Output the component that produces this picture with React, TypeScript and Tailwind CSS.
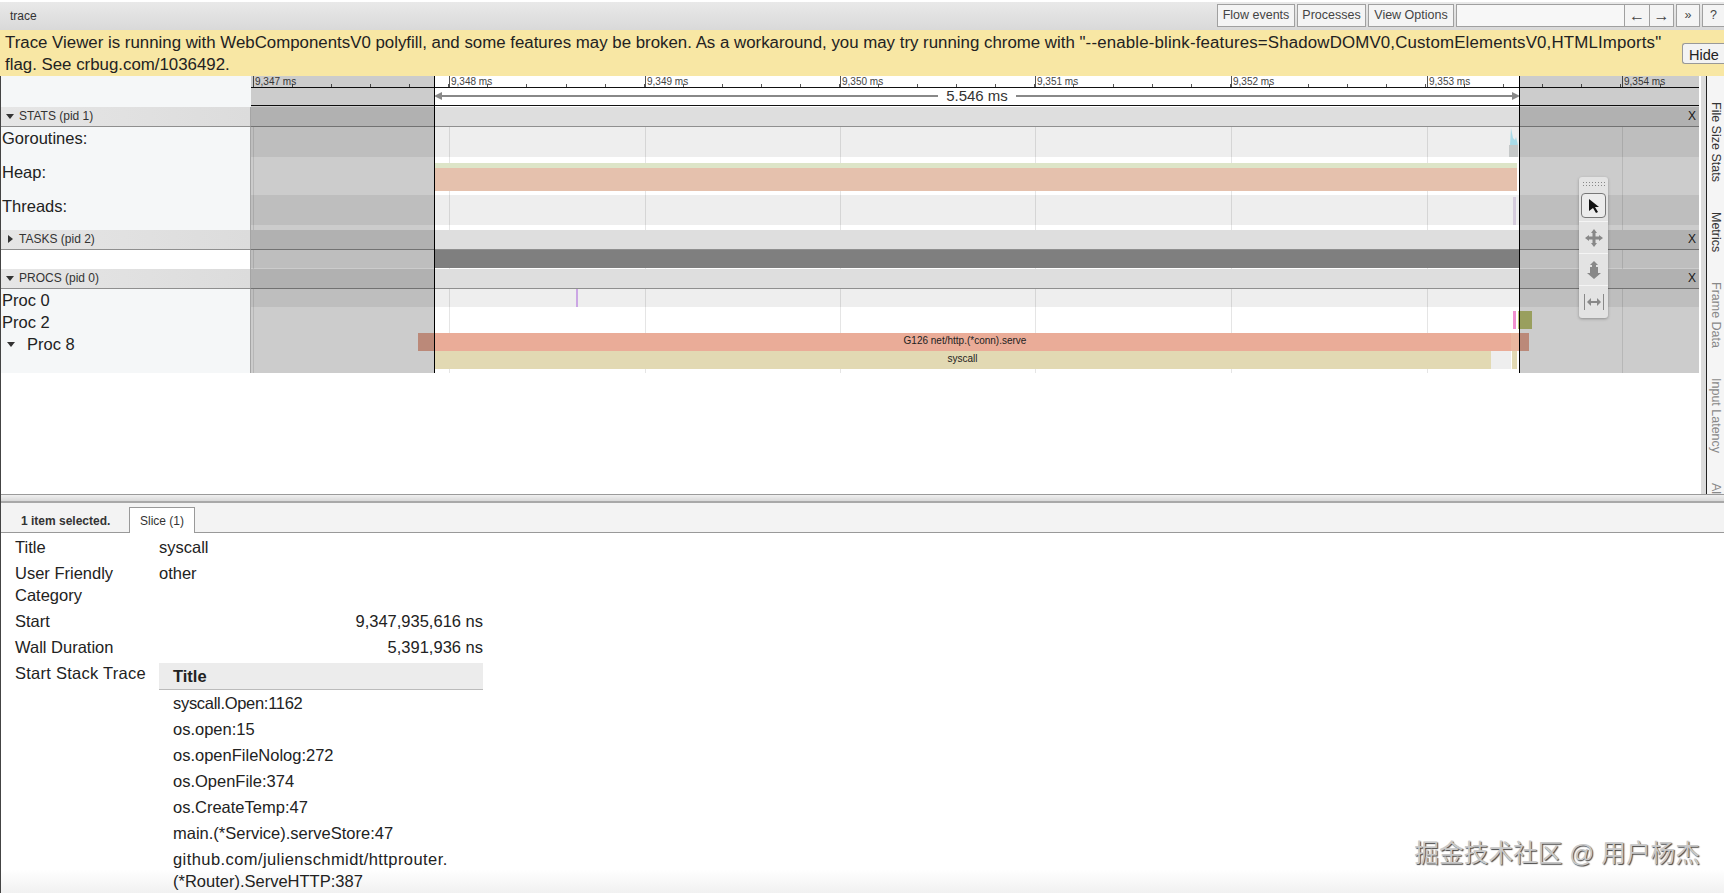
const majors = [2, 198, 394, 589, 784, 980, 1176, 1371]
const labels = ["9,347 ms", "9,348 ms", "9,349 ms", "9,350 ms", "9,351 ms", "9,352 ms", "9,353 ms", "9,354 ms"]
const minors = Array.from({ length: 37 }, (_, i) => 2 + i * 39.07)
const stack = ["os.open:15", "os.openFileNolog:272", "os.OpenFile:374", "os.CreateTemp:47", "main.(*Service).serveStore:47"]

function Grid() {
  return (
    <>
      {majors.map((x) => (
        <div key={x} className="absolute top-0 bottom-0 w-px bg-black/10" style={{ left: x }} />
      ))}
    </>
  )
}

function Tri({ open }: { open: boolean }) {
  return (
    <svg width="8" height="8" viewBox="0 0 8 8" className="shrink-0 fill-[#333]">
      {open ? <path d="M0 2h8L4 7z" /> : <path d="M2 0v8l5-4z" />}
    </svg>
  )
}

function Header({ title, open }: { title: string; open: boolean }) {
  return (
    <div className="flex h-5 border-b border-[#8f8f8f] bg-[#dedede]">
      <div className="flex w-[251px] items-center gap-[5px] border-r border-[#a5a5a5] bg-gradient-to-r from-[#e6e6e6] to-[#dcdcdc] pb-[2px] pl-[6px] text-[12px] text-[#333]">
        <Tri open={open} />
        {title}
      </div>
      <div className="relative flex flex-1 items-center justify-end pr-[3px] pb-[2px] text-[12px] text-[#222]">X</div>
    </div>
  )
}

function Row({ label, h, bg, children, labelClass }: { label?: React.ReactNode; h: string; bg: string; children?: React.ReactNode; labelClass?: string }) {
  return (
    <div className={`flex ${h}`}>
      <div className={`w-[251px] border-r border-[#a5a5a5] bg-[#f5f7f8] pl-[2px] text-[16.5px] leading-[22px] text-[#222] ${labelClass ?? ""}`}>{label}</div>
      <div className={`relative flex-1 overflow-visible ${bg}`}>
        <Grid />
        {children}
      </div>
    </div>
  )
}

function ToolBtn({ children, className }: { children: React.ReactNode; className?: string }) {
  return <div className={`flex h-[23px] items-center justify-center border border-[#a0a0a0] bg-[#f4f4f4] text-[12.5px] text-[#444] ${className ?? ""}`}>{children}</div>
}

function Palette() {
  return (
    <div className="absolute top-[101px] left-[1328px] flex h-[141px] w-[29px] flex-col items-center rounded-[3px] bg-[#e3e3e3] shadow-[0_1px_3px_rgba(0,0,0,0.3)]">
      <div className="mt-[4px] h-[7px] w-[23px] bg-[radial-gradient(#888_0.7px,transparent_0.9px)] bg-[length:3px_3px]" />
      <div className="mt-[5px] flex h-[25px] w-[25px] items-center justify-center rounded-[4px] border border-[#777] bg-[#ececec]">
        <svg width="14" height="16" viewBox="0 0 14 16"><path d="M2 1l10 8H8l3 5-2 1-3-5-4 3z" fill="#111" /></svg>
      </div>
      <div className="mt-[3px] flex h-[32px] w-full items-center justify-center border-t border-[#f4f4f4]">
        <svg width="18" height="18" viewBox="0 0 18 18" fill="#888"><path d="M9 0l3 4h-1.5v3.5H14V6l4 3-4 3v-1.5h-3.5V14H12l-3 4-3-4h1.5v-3.5H4V12L0 9l4-3v1.5h3.5V4H6z" /></svg>
      </div>
      <div className="flex h-[32px] w-full items-center justify-center border-t border-[#f4f4f4]">
        <svg width="14" height="18" viewBox="0 0 14 18" fill="#888"><path d="M7 0l4 4H9v2h2v6h3l-7 6-7-6h3V6h2V4H3z" /></svg>
      </div>
      <div className="flex h-[32px] w-full items-center justify-center border-t border-[#f4f4f4]">
        <svg width="20" height="16" viewBox="0 0 20 16" fill="#888"><path d="M0 0h1v16H0zM19 0h1v16h-1zM3 8l4-4v3h6V4l4 4-4 4V9H7v3z" /></svg>
      </div>
    </div>
  )
}

export default function App() {
  return (
    <div className="relative flex h-[893px] w-[1724px] flex-col overflow-hidden bg-white font-['Liberation_Sans','Noto_Sans_CJK_SC',sans-serif]">
      {/* toolbar */}
      <div className="mt-[2px] flex h-[28px] shrink-0 items-start justify-between bg-gradient-to-b from-[#e9e9e9] to-[#d9d9d9] pt-[2px] pl-[10px]">
        <div className="pt-[3px] text-[12px] text-[#333]">trace</div>
        <div className="flex gap-[2px]">
          <ToolBtn className="w-[78px]">Flow events</ToolBtn>
          <ToolBtn className="w-[69px]">Processes</ToolBtn>
          <ToolBtn className="w-[86px]">View Options</ToolBtn>
          <div className="flex">
            <div className="h-[23px] w-[169px] border border-[#a0a0a0] bg-[#f7f7f7]" />
            <ToolBtn className="w-[25px] border-l-0 text-[16px]">←</ToolBtn>
            <ToolBtn className="w-[24px] border-l-0 text-[16px]">→</ToolBtn>
          </div>
          <ToolBtn className="w-[24px]">»</ToolBtn>
          <ToolBtn className="w-[22px] border-r-0">?</ToolBtn>
        </div>
      </div>

      {/* warning */}
      <div className="flex h-[46px] shrink-0 items-start justify-between bg-[#f8e7a4] pt-[2px] pl-[5px] text-[16.85px] leading-[22px] whitespace-nowrap text-[#222]">
        <div>
          Trace Viewer is running with WebComponentsV0 polyfill, and some features may be broken. As a workaround, you may try running chrome with <span className="tracking-[0.16px]">"--enable-blink-features=ShadowDOMV0,CustomElementsV0,HTMLImports"</span>
          <br />
          flag. See crbug.com/1036492.
        </div>
        <button className="mt-[11px] h-[21px] w-[42px] shrink-0 rounded-l-[3px] border border-r-0 border-[#999] bg-[#f3f3f3] pl-[6px] text-left text-[14.5px] text-[#222]">Hide</button>
      </div>

      {/* timeline + side panel */}
      <div className="flex h-[418px] shrink-0">
        <div className="relative w-[1699px]">
          <div className="flex h-[12px]">
            <div className="w-[251px] bg-[#f5f7f8]" />
            <div className="relative flex-1 border-b border-[#111] bg-white">
              {minors.map((x) => (
                <div key={x} className="absolute bottom-0 h-[3px] w-px bg-[#555]" style={{ left: x }} />
              ))}
              {majors.map((x, i) => (
                <div key={x} className="absolute top-0 bottom-0 border-l border-[#555] pl-px text-[10px] leading-[11px] text-[#444]" style={{ left: x }}>
                  {labels[i]}
                </div>
              ))}
            </div>
          </div>
          <div className="flex h-[18px]">
            <div className="w-[251px] bg-[#f5f7f8]" />
            <div className="relative flex-1 border-b border-[#111] bg-white">
              <div className="absolute top-[3px] left-[183px] flex h-[10px] w-[1086px] items-center">
                <svg width="8" height="8" viewBox="0 0 8 8" className="shrink-0 fill-[#888]"><path d="M0 4l8-4v8z" /></svg>
                <div className="h-[2px] flex-1 bg-[#888]" />
                <div className="bg-white px-[8px] text-[15px] leading-[14px] text-[#333]">5.546 ms</div>
                <div className="h-[2px] flex-1 bg-[#888]" />
                <svg width="8" height="8" viewBox="0 0 8 8" className="shrink-0 fill-[#888]"><path d="M8 4L0 0v8z" /></svg>
              </div>
            </div>
          </div>
          <div className="flex h-px">
            <div className="w-[251px] bg-[#f5f7f8]" />
          </div>

          <Header title="STATS (pid 1)" open />
          <Row label="Goroutines:" h="h-[30px]" bg="bg-[#eeeeee]">
            <svg width="10" height="30" viewBox="0 0 10 30" className="absolute top-0 left-[1258px]">
              <path d="M1 18L2 1l2 10 2 2 1-3 2 8z" fill="#a9dbe8" />
              <path d="M0 18h9v12H0z" fill="#c5c8c8" />
            </svg>
          </Row>
          <Row label="Heap:" h="h-[38px]" bg="bg-white" labelClass="pt-[4px]">
            <div className="absolute top-[6px] left-[184px] h-[5px] w-[1082px] bg-[#dde5c8]" />
            <div className="absolute top-[11px] left-[184px] h-[23px] w-[1082px] bg-[#e5c1ad]" />
          </Row>
          <Row label="Threads:" h="h-[30px]" bg="bg-[#eeeeee]">
            <div className="absolute top-[2px] left-[1262px] h-[28px] w-[3px] bg-[#d5cbdc]" />
          </Row>
          <Row h="h-[5px]" bg="bg-white" />
          <Header title="TASKS (pid 2)" open={false} />
          <Row h="h-[18px]" bg="bg-[#eeeeee]" labelClass="bg-white">
            <div className="absolute top-0 left-[183px] h-[18px] w-[1085px] bg-[#7f7f7f]" />
          </Row>
          <Row h="h-px" bg="bg-white" labelClass="bg-white" />
          <Header title="PROCS (pid 0)" open />
          <Row label="Proc 0" h="h-[18px]" bg="bg-[#eeeeee]">
            <div className="absolute top-0 left-[325px] h-[18px] w-[2px] bg-[#cba6e4]" />
          </Row>
          <Row label="Proc 2" h="h-[26px]" bg="bg-white" labelClass="pt-[4px]">
            <div className="absolute top-[4px] left-[1262px] h-[18px] w-[3px] bg-[#f08fcf]" />
            <div className="absolute top-[4px] left-[1267px] h-[18px] w-[14px] bg-[#c0c776]" />
          </Row>
          <Row h="h-[40px]" bg="bg-white" label={<div className="flex items-center gap-[12px] pl-[5px]"><Tri open />Proc 8</div>}>
            <div className="absolute top-0 left-[167px] flex h-[18px] w-[1111px] items-center justify-center bg-[#eaac98] pr-[17px] pb-[3px] text-[10px] text-[#222]">G126 net/http.(*conn).serve</div>
            <div className="absolute top-0 left-[1260px] h-[18px] w-[8px] bg-[#e9b7a0]" />
            <div className="absolute top-[18px] left-[183px] flex h-[18px] w-[1057px] items-center justify-center bg-[#e2d9b3] pb-[3px] text-[10px] text-[#222]">syscall</div>
            <div className="absolute top-[18px] left-[1240px] h-[18px] w-[20px] bg-[#eeeeee]" />
            <div className="absolute top-[18px] left-[1261px] h-[18px] w-[5px] bg-[#e2d9b3]" />
          </Row>

          {/* selection shade over the tracks */}
          <div className="absolute top-0 left-[251px] h-[297px] w-[184px] border-r border-black bg-black/20" />
          <div className="absolute top-0 left-[1519px] h-[297px] w-[180px] border-l border-black bg-black/20" />
          <div className="absolute top-0 left-[251px] h-[297px] w-[1448px]">
            <Palette />
          </div>
        </div>

        <div className="ml-[2px] w-[5px] bg-[#dcdcdc]" />
        <div className="flex flex-1 flex-col gap-[30px] overflow-hidden border-l border-[#222] bg-[#f5f5f5] pt-[26px] pl-px text-[12.5px] leading-[16px]">
          <div className="shrink-0 whitespace-nowrap text-[#333] [writing-mode:vertical-rl]">File Size Stats</div>
          <div className="shrink-0 whitespace-nowrap text-[#333] [writing-mode:vertical-rl]">Metrics</div>
          <div className="shrink-0 whitespace-nowrap text-[#888] [writing-mode:vertical-rl]">Frame Data</div>
          <div className="shrink-0 whitespace-nowrap text-[#888] [writing-mode:vertical-rl]">Input Latency</div>
          <div className="shrink-0 whitespace-nowrap text-[#888] [writing-mode:vertical-rl]">Al</div>
        </div>
      </div>

      {/* analysis panel */}
      <div className="h-[9px] shrink-0 border-t border-b-2 border-t-[#9a9a9a] border-b-[#a8a8a8] bg-gradient-to-b from-[#f0f0f0] to-[#d8d8d8]" />
      <div className="flex h-[30px] shrink-0 items-end border-b border-[#999] bg-[#f3f3f3] pl-[21px]">
        <div className="mb-[2px] w-[108px] text-[12px] font-bold text-[#333]">1 item selected.</div>
        <div className="-mb-px flex h-[26px] w-[66px] items-center justify-center border border-b-0 border-[#999] bg-white text-[12px] text-[#333]">Slice (1)</div>
      </div>

      <div className="pointer-events-none absolute right-0 bottom-0 left-0 h-[24px] bg-gradient-to-b from-transparent to-[#f1f1f1]" />
      <div className="relative grid shrink-0 grid-cols-[144px_324px] pt-px pl-[15px] text-[16.5px] leading-[22px] text-[#222]">
        <div className="py-[2px]">Title</div>
        <div className="py-[2px]">syscall</div>
        <div className="py-[2px]">User Friendly Category</div>
        <div className="py-[2px]">other</div>
        <div className="py-[2px]">Start</div>
        <div className="py-[2px] text-right">9,347,935,616 ns</div>
        <div className="py-[2px]">Wall Duration</div>
        <div className="py-[2px] text-right">5,391,936 ns</div>
        <div className="py-[2px] tracking-[0.26px]">Start Stack Trace</div>
        <div className="pt-[3px]">
          <div className="h-[27px] border-b border-[#bbb] bg-[#ececec] pl-[14px] leading-[26px] font-bold">Title</div>
          <div className="py-[2px] pl-[14px] tracking-[-0.3px]">syscall.Open:1162</div>
          {stack.map((s) => (
            <div key={s} className="py-[2px] pl-[14px]">{s}</div>
          ))}
          <div className="py-[2px] pl-[14px]">
            <span className="tracking-[0.42px]">github.com/julienschmidt/httprouter.</span>
            <br />
            (*Router).ServeHTTP:387
          </div>
        </div>
      </div>

      <div className="absolute right-[24px] bottom-[24px] text-[24.7px] leading-[30px] text-[#c8c8c8] [text-shadow:1px_1px_1px_#444]">掘金技术社区 @ 用户杨杰</div>
      <div className="absolute top-[76px] bottom-0 left-0 w-px bg-[#444]" />
    </div>
  )
}
